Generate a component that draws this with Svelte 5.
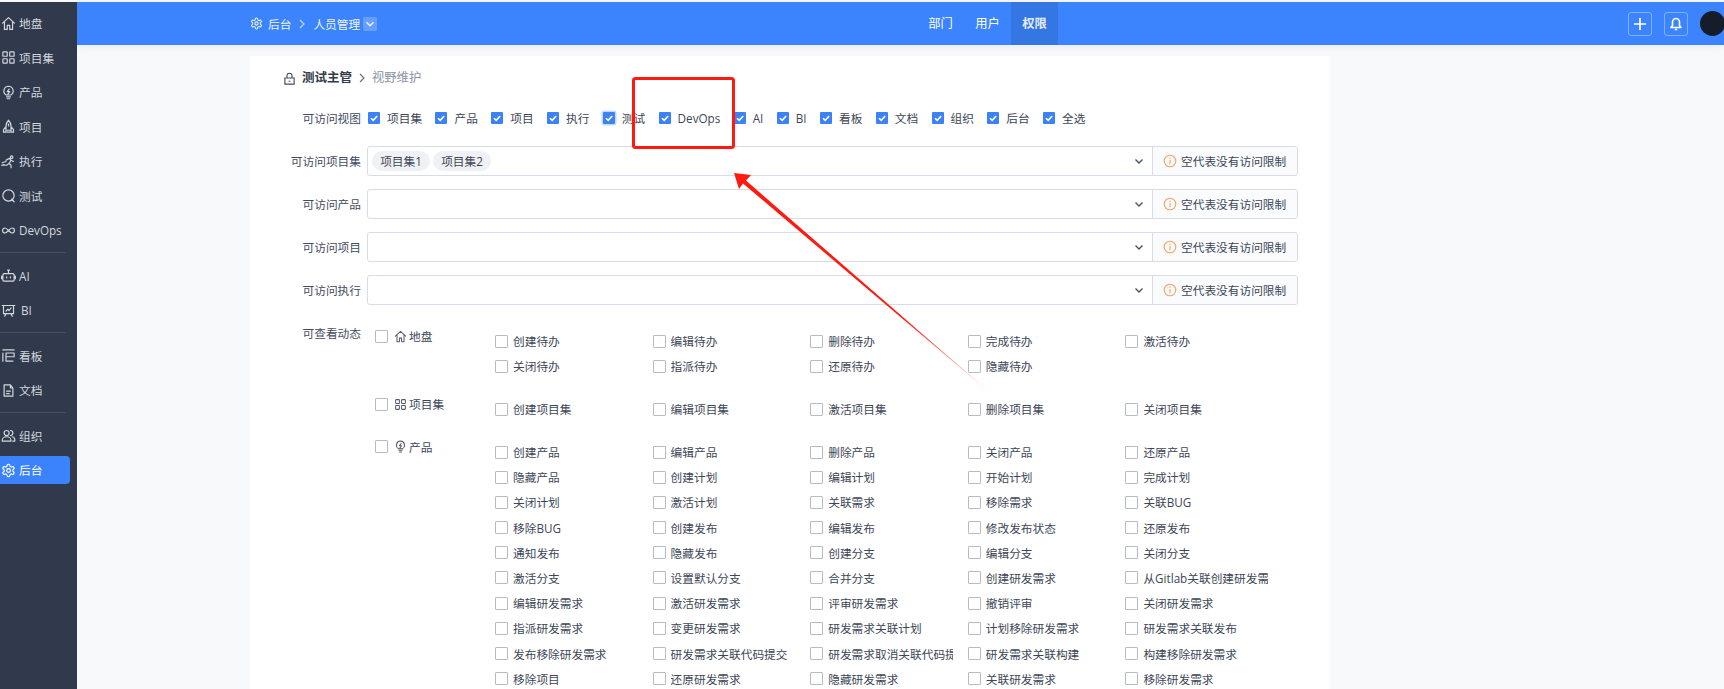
<script>
  const I = {
    home: 'M2.500 11.500 12 2.500l9.500 9M5.500 9.500V21.500h4.500v-6.500h4v6.500h4.500V9.500',
    grid: 'M4 3h5a1 1 0 0 1 1 1v5a1 1 0 0 1-1 1H4a1 1 0 0 1-1-1V4a1 1 0 0 1 1-1zM15 3h5a1 1 0 0 1 1 1v5a1 1 0 0 1-1 1h-5a1 1 0 0 1-1-1V4a1 1 0 0 1 1-1zM4 14h5a1 1 0 0 1 1 1v5a1 1 0 0 1-1 1H4a1 1 0 0 1-1-1v-5a1 1 0 0 1 1-1zM15 14h5a1 1 0 0 1 1 1v5a1 1 0 0 1-1 1h-5a1 1 0 0 1-1-1v-5a1 1 0 0 1 1-1z',
    bulb: 'M9 19h6M10 22h4M12 2a7.500 7.500 0 0 0-4 13.800V16h8v-.2A7.500 7.500 0 0 0 12 2zM13 6.500l-3 4h4l-3 4',
    rocket: 'M12 2c3 3 4 6 4 10v6H8v-6c0-4 1-7 4-10zM8 12l-4 5v4h4v-3M16 12l4 5v4h-4v-3M10 21h4M12 8v3',
    run: 'M15 5a2 2 0 1 0 4 0 2 2 0 0 0-4 0zM8 10l5-3 3 3-3 5 3 3v4M13 15l-4 3H3M16 10l4 2M2 14l6-2M1 18l4-1',
    search: 'M12 3a9 9 0 1 0 0 18 9 9 0 0 0 0-18zM17 18l4 4',
    infinity: 'M6.500 8a4 4 0 1 0 0 8c3 0 8-8 11-8a4 4 0 1 1 0 8c-3 0-8-8-11-8z',
    robot: 'M5 9h14a2 2 0 0 1 2 2v8a2 2 0 0 1-2 2H5a2 2 0 0 1-2-2v-8a2 2 0 0 1 2-2zM12 9V5M10.500 3.500h3M1 13v4M23 13v4M9 14v2M15 14v2',
    screen: 'M2 4h20M4 4v13h16V4M8 13l3-3 2 2 3-4M8 17l-2 4M16 17l2 4',
    kanban: 'M3 3h18M3 8v13M8 8h13v6H8zM8 14v7h11',
    doc: 'M5 3h10l4 5v13H5zM15 3v5h4M9 13h6M9 17h4',
    users: 'M9 4a4 4 0 1 0 0 8 4 4 0 0 0 0-8zM2 21v-1a6 6 0 0 1 6-6h2a6 6 0 0 1 6 6v1zM15 4a4 4 0 0 1 0 8M18 14a5 5 0 0 1 4 6v1h-3',
    gear: 'M12.220 2h-.44a2 2 0 0 0-2 2v.18a2 2 0 0 1-1 1.730l-.43.250a2 2 0 0 1-2 0l-.15-.08a2 2 0 0 0-2.730.730l-.22.380a2 2 0 0 0 .730 2.730l.15.100a2 2 0 0 1 1 1.720v.510a2 2 0 0 1-1 1.740l-.15.090a2 2 0 0 0-.730 2.730l.22.380a2 2 0 0 0 2.730.730l.15-.08a2 2 0 0 1 2 0l.43.250a2 2 0 0 1 1 1.730V20a2 2 0 0 0 2 2h.44a2 2 0 0 0 2-2v-.18a2 2 0 0 1 1-1.730l.43-.25a2 2 0 0 1 2 0l.15.080a2 2 0 0 0 2.730-.73l.22-.39a2 2 0 0 0-.73-2.730l-.15-.08a2 2 0 0 1-1-1.740v-.5a2 2 0 0 1 1-1.740l.15-.09a2 2 0 0 0 .73-2.730l-.22-.38a2 2 0 0 0-2.730-.73l-.15.080a2 2 0 0 1-2 0l-.43-.25a2 2 0 0 1-1-1.730V4a2 2 0 0 0-2-2zM12 9a3 3 0 1 0 0 6 3 3 0 0 0 0-6z'
  };
  const nav = [
    [['home','地盘'],['grid','项目集'],['bulb','产品'],['rocket','项目'],['run','执行'],['search','测试'],['infinity','DevOps']],
    [['robot','AI'],['screen','BI']],
    [['kanban','看板'],['doc','文档']],
    [['users','组织'],['gear','后台']]
  ];
  const views = ['项目集','产品','项目','执行','测试','DevOps','AI','BI','看板','文档','组织','后台','全选'];
  const fields = [['可访问项目集',['项目集1','项目集2']],['可访问产品',[]],['可访问项目',[]],['可访问执行',[]]];
  const sections = [
    { icon:'home', name:'地盘', items:['创建待办','编辑待办','删除待办','完成待办','激活待办','关闭待办','指派待办','还原待办','隐藏待办'] },
    { icon:'grid', name:'项目集', items:['创建项目集','编辑项目集','激活项目集','删除项目集','关闭项目集'] },
    { icon:'bulb', name:'产品', items:['创建产品','编辑产品','删除产品','关闭产品','还原产品','隐藏产品','创建计划','编辑计划','开始计划','完成计划','关闭计划','激活计划','关联需求','移除需求','关联BUG','移除BUG','创建发布','编辑发布','修改发布状态','还原发布','通知发布','隐藏发布','创建分支','编辑分支','关闭分支','激活分支','设置默认分支','合并分支','创建研发需求','从Gitlab关联创建研发需求','编辑研发需求','激活研发需求','评审研发需求','撤销评审','关闭研发需求','指派研发需求','变更研发需求','研发需求关联计划','计划移除研发需求','研发需求关联发布','发布移除研发需求','研发需求关联代码提交','研发需求取消关联代码提交','研发需求关联构建','构建移除研发需求','移除项目','还原研发需求','隐藏研发需求','关联研发需求','移除研发需求'] }
  ];
</script>

{#snippet icon(name, cls)}
  <svg class={cls} viewBox="0 0 24 24" fill="none" stroke="currentColor" stroke-width="1.900" stroke-linecap="round" stroke-linejoin="round"><path d={I[name]} /></svg>
{/snippet}

<div class="page">
  <aside class="side">
    {#each nav as group, g}
      {#if g > 0}<div class="rule"></div>{/if}
      {#each group as it}
        <div class="nav-row">
          <div class="nav-item" class:active={it[1] === '后台'} class:bi={it[1] === 'BI'}>
            {@render icon(it[0], 'nav-ic')}
            <span>{it[1]}</span>
          </div>
        </div>
      {/each}
    {/each}
  </aside>

  <div class="main">
    <header class="top">
      <div class="crumbs">
        {@render icon('gear', 'crumb-ic')}
        <span>后台</span>
        <svg class="sep" viewBox="0 0 8 12" fill="none" stroke="currentColor" stroke-width="1.300"><path d="M2 2l4 4-4 4" /></svg>
        <span>人员管理</span>
        <span class="drop"><svg viewBox="0 0 12 12" fill="none" stroke="currentColor" stroke-width="1.300"><path d="M3 4.500l3 3 3-3" /></svg></span>
      </div>
      <nav class="tabs">
        <span class="tab">部门</span>
        <span class="tab">用户</span>
        <span class="tab on">权限</span>
      </nav>
      <div class="actions">
        <span class="act"><svg viewBox="0 0 14 14" fill="none" stroke="#fff" stroke-width="1.700"><path d="M7 1v12M1 7h12" /></svg></span>
        <span class="act"><svg viewBox="0 0 14 14" fill="none" stroke="#fff" stroke-width="1.600" stroke-linejoin="round"><path d="M7 1.500a3.500 3.500 0 0 0-3.500 3.500v3.500L2 10.500h10L10.500 8.500V5A3.500 3.500 0 0 0 7 1.500zM5.800 12.500h2.400" /></svg></span>
        <span class="avatar"></span>
      </div>
    </header>

    <main class="card">
      <div class="title">
        <svg class="lock" viewBox="0 0 14 14" fill="none" stroke="currentColor" stroke-width="1.200"><path d="M2 6.500h10v6.500H2zM4.300 6.500V4a2.700 2.700 0 0 1 5.400 0v2.500M6 10h2" /></svg>
        <b>测试主管</b>
        <svg class="sep dark" viewBox="0 0 8 12" fill="none" stroke="currentColor" stroke-width="1.300"><path d="M2 2l4 4-4 4" /></svg>
        <span class="muted">视野维护</span>
      </div>

      <div class="row views">
        <div class="label">可访问视图</div>
        <div class="view-list">
          {#each views as v}
            <label class="view">
              <span class="box checked" class:focus={v === '测试'}>
                <svg viewBox="0 0 12 12" fill="none" stroke="#fff" stroke-width="1.600"><path d="M3 6.200l2.200 2.200L9.200 4" /></svg>
              </span>
              <span>{v}</span>
            </label>
          {/each}
        </div>
      </div>

      {#each fields as f}
        <div class="row field">
          <div class="label">{f[0]}</div>
          <div class="select">
            <div class="value">
              {#each f[1] as c}<span class="chip">{c}</span>{/each}
            </div>
            <svg class="chev" viewBox="0 0 12 12" fill="none" stroke="currentColor" stroke-width="1.400"><path d="M2.500 4.500 6 8l3.500-3.500" /></svg>
            <div class="addon">
              <svg class="info" viewBox="0 0 14 14" fill="none" stroke="#f5a35c" stroke-width="1.100"><circle cx="7" cy="7" r="5.800" /><path d="M7 6v4.200M7 3.800v1.200" /></svg>
              <span>空代表没有访问限制</span>
            </div>
          </div>
        </div>
      {/each}

      <div class="dyn">
        <div class="label dyn-label">可查看动态</div>
        <div class="sections">
          {#each sections as s}
            <section class="sec">
              <div class="head">
                <span class="box"></span>
                {@render icon(s.icon, 'head-ic')}
                <span>{s.name}</span>
              </div>
              <div class="items">
                {#each s.items as t}
                  <div class="item"><span class="box"></span><span class="txt">{t}</span></div>
                {/each}
              </div>
            </section>
          {/each}
        </div>
      </div>
    </main>
  </div>

  <svg class="marks" width="1724" height="689" viewBox="0 0 1724 689">
    <defs>
      <linearGradient id="fade" gradientUnits="userSpaceOnUse" x1="900" y1="316" x2="996" y2="398">
        <stop offset="0" stop-color="#ff1a10" />
        <stop offset="1" stop-color="#ff1a10" stop-opacity="0.1" />
      </linearGradient>
    </defs>
    <rect x="633.500" y="78.500" width="100" height="69" rx="2" fill="none" stroke="#ff1a10" stroke-width="3" />
    <polygon points="734,173 751,175 746,180.500 996,398 743,183.500 739,189" fill="url(#fade)" />
  </svg>
</div>

<style>
  :global(body) { margin: 0; background: #fff; }
  .page {
    position: relative; display: flex; width: 1724px; height: 687px; padding-top: 2px; overflow: hidden;
    font-family: "Open Sans", "Noto Sans CJK SC", sans-serif; font-size: 11.700px; color: #3d4657; line-height: 20px;
    background: #f8f9fb;
  }
  .side { width: 77px; flex: none; background: #303a4c; color: #d3d7dd; padding-top: 4px; box-sizing: border-box; }
  .rule { height: 1px; background: #465062; width: 66px; margin: 4.500px 0 5.500px; }
  .nav-row { height: 34.500px; display: flex; align-items: center; }
  .nav-item { width: 70px; height: 28px; display: flex; align-items: center; gap: 3px; box-sizing: border-box; padding-left: 1px; border-radius: 0 4px 4px 0; }
  .nav-item.bi { gap: 5px; }
  .nav-item.active { background: #3b82fd; color: #fff; }
  :global(.nav-ic) { width: 15px; height: 15px; flex: none; }

  .main { flex: 1; min-width: 0; display: flex; flex-direction: column; }
  .top { height: 43px; flex: none; display: flex; align-items: center; background: #3b84fd; color: #fff; box-shadow: 0 2px 8px rgba(30, 50, 90, .07); position: relative; }
  .crumbs { width: 840px; flex: none; box-sizing: border-box; padding-left: 173px; display: flex; align-items: center; gap: 5px; color: #eef4ff; }
  :global(.crumb-ic) { width: 13px; height: 13px; }
  .sep { width: 8px; height: 12px; margin: 0 2px; color: #bcd4fb; }
  .sep.dark { color: #6f7888; margin: 0; }
  .drop { width: 14px; height: 14px; margin-left: -2px; background: rgba(255,255,255,.22); border-radius: 2px; display: flex; }
  .drop svg { width: 14px; height: 14px; }
  .tabs { display: flex; align-self: stretch; }
  .tab { width: 47px; display: flex; align-items: center; justify-content: center; font-size: 12.300px; }
  .tab.on { background: #3577e2; font-weight: 700; color: #e4ecfa; }
  .actions { margin-left: auto; display: flex; align-items: center; gap: 12px; margin-right: -1px; }
  .act { width: 22px; height: 22px; border: 1px solid rgba(255,255,255,.35); border-radius: 3px; display: flex; align-items: center; justify-content: center; }
  .act svg { width: 14px; height: 14px; }
  .avatar { width: 25px; height: 25px; border-radius: 50%; background: #151d2b; }

  .card { margin: 11px 0 0 173px; width: 1080px; background: #fff; box-sizing: border-box; padding-top: 12px; flex: 1; }
  .title { height: 20px; padding-left: 33px; display: flex; align-items: center; gap: 6px; margin-bottom: 20px; }
  .title b { font-size: 12.500px; color: #333b49; }
  .lock { width: 13px; height: 13px; color: #444c5a; }
  .muted { color: #8a93a6; font-size: 12.300px; }
  .row { display: flex; align-items: center; gap: 6px; }
  .label { width: 111px; flex: none; text-align: right; color: #434b62; }
  .views { height: 20px; margin-bottom: 18px; }
  .view-list { display: flex; gap: 13.400px; padding-left: 1px; }
  .view { display: flex; align-items: center; gap: 7px; }
  .box { width: 11px; height: 11px; flex: none; display: block; border: 1px solid #b6bac9; border-radius: 1px; background: #fff; box-sizing: content-box; }
  .box.checked { width: 12px; height: 12px; background: #3b82f6; border: 0; }
  .box.checked svg { display: block; width: 12px; height: 12px; }
  .box.focus { box-shadow: 0 0 0 1.500px #c6dafb; }
  .field { margin-bottom: 13px; }
  .select { width: 931px; height: 30px; box-sizing: border-box; display: flex; align-items: center; border: 1px solid #d8dce8; border-radius: 3px; }
  .value { flex: 1; display: flex; gap: 3px; padding-left: 4px; }
  .chip { height: 20px; width: 58px; display: flex; align-items: center; justify-content: center; border-radius: 10px; background: #eff1f4; }
  .chev { width: 12px; height: 12px; color: #4a5262; margin-right: 7px; }
  .addon { width: 145px; flex: none; align-self: stretch; box-sizing: border-box; background: #fafbfd; border-left: 1px solid #d8dce8; border-radius: 0 3px 3px 0; padding-left: 10px; display: flex; align-items: center; gap: 4px; }
  .info { width: 14px; height: 14px; }

  .dyn { display: flex; gap: 14px; margin-top: 18.500px; }
  .dyn-label { height: 20px; line-height: 20px; margin-top: -1px; }
  .sections { display: flex; flex-direction: column; gap: 17.700px; padding-top: 5px; }
  .sec { display: flex; }
  .head { width: 120px; flex: none; height: 20px; display: flex; align-items: center; margin-top: -2.500px; }
  .head .box { margin-right: 6px; }
  :global(.head-ic) { width: 13px; height: 13px; margin-right: 2px; color: #555d6e; flex: none; }
  .items { display: grid; grid-template-columns: repeat(5, 157.600px); grid-auto-rows: 25.200px; }
  .item { display: flex; align-items: center; gap: 5px; min-width: 0; }
  .txt { width: 125px; white-space: nowrap; overflow: hidden; }

  .marks { position: absolute; left: 0; top: 0; pointer-events: none; }
</style>
